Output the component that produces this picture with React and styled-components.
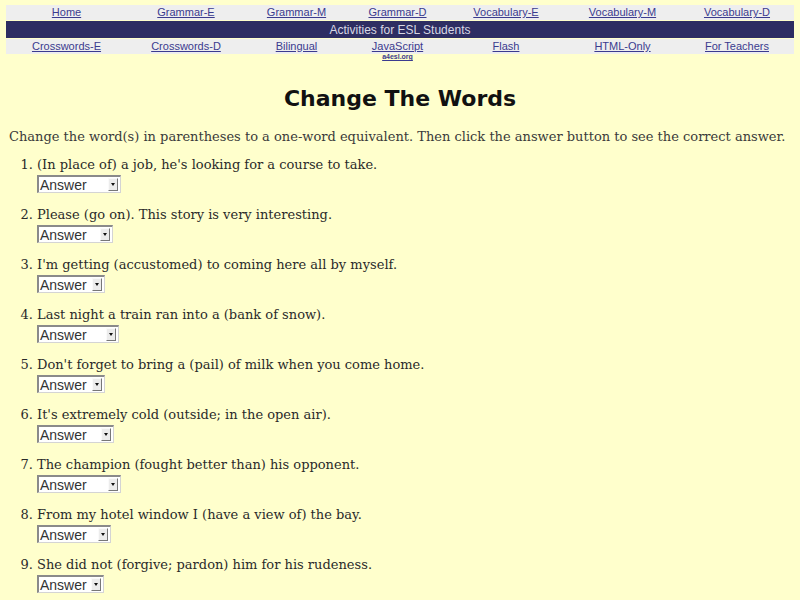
import React from "react";
import styled, { createGlobalStyle } from "styled-components";

const Global = createGlobalStyle`
  html, body {
    margin: 0;
    padding: 0;
    background: #ffffcc;
  }
  body {
    padding: 5px 6px 0 6px;
    font-family: "DejaVu Serif", serif;
    color: #2a2a2a;
  }
`;

const Nav = styled.div`
  display: flex;
  flex-direction: column;
  font-family: "Liberation Sans", Arial, sans-serif;
`;

const LinkRow = styled.div`
  display: grid;
  grid-template-columns: 121px 118px 103px 99px 118px 115px 114px;
  background: #eeeeee;
  height: 15px;
  align-items: center;
`;

const Cell = styled.div`
  display: flex;
  flex-direction: column;
  align-items: center;
  position: relative;
`;

const NavLink = styled.a`
  font-size: 11px;
  color: #3b3b8f;
  text-decoration: underline;
  line-height: 13px;
`;

const Banner = styled.div`
  background: #2e2e62;
  color: #d8d8e4;
  height: 17px;
  margin: 1px 0;
  display: flex;
  align-items: center;
  justify-content: center;
  font-size: 12px;
`;

const SiteTag = styled.a`
  position: absolute;
  top: 13px;
  font-size: 7px;
  font-weight: bold;
  color: #3b3b8f;
  text-decoration: underline;
`;

const Title = styled.h1`
  margin: 30px 0 0 0;
  text-align: center;
  font-family: "Comic Sans MS", "DejaVu Sans", sans-serif;
  font-weight: bold;
  font-size: 22px;
  color: #111;
  line-height: 30px;
`;

const Intro = styled.p`
  margin: 15px 0 0 3px;
  font-size: 13px;
  line-height: 16px;
  color: #3a3a3a;
  white-space: nowrap;
`;

const List = styled.ol`
  margin: 12px 0 0 0;
  padding: 0 0 0 31px;
  font-size: 13px;
  line-height: 16px;
  color: #2a2a2a;
`;

const Item = styled.li`
  margin-bottom: 14px;
`;

const Picker = styled.div`
  margin-top: 2px;
  width: ${(p) => p.$w}px;
  height: 18px;
  box-sizing: border-box;
  background: #fff;
  border-top: 2px solid #8a8a8a;
  border-left: 2px solid #8a8a8a;
  border-right: 1px solid #d4d4d4;
  border-bottom: 1px solid #d4d4d4;
  display: flex;
  align-items: center;
  justify-content: space-between;
  padding: 0 2px 0 1px;
  font-family: "Liberation Sans", Arial, sans-serif;
  font-size: 14px;
  color: #333;
`;

const Arrow = styled.span`
  width: 10px;
  height: 13px;
  box-sizing: border-box;
  background: #ececec;
  border-right: 1px solid #777;
  border-bottom: 1px solid #777;
  border-top: 1px solid #fafafa;
  border-left: 1px solid #fafafa;
  display: flex;
  align-items: center;
  justify-content: center;
  &::after {
    content: "";
    border-left: 2.5px solid transparent;
    border-right: 2.5px solid transparent;
    border-top: 3px solid #111;
  }
`;

const topLinks = ["Home", "Grammar-E", "Grammar-M", "Grammar-D", "Vocabulary-E", "Vocabulary-M", "Vocabulary-D"];
const bottomLinks = ["Crosswords-E", "Crosswords-D", "Bilingual", "JavaScript", "Flash", "HTML-Only", "For Teachers"];

const questions = [
  ["(In place of) a job, he's looking for a course to take.", 84],
  ["Please (go on). This story is very interesting.", 76],
  ["I'm getting (accustomed) to coming here all by myself.", 68],
  ["Last night a train ran into a (bank of snow).", 82],
  ["Don't forget to bring a (pail) of milk when you come home.", 68],
  ["It's extremely cold (outside; in the open air).", 77],
  ["The champion (fought better than) his opponent.", 84],
  ["From my hotel window I (have a view of) the bay.", 74],
  ["She did not (forgive; pardon) him for his rudeness.", 67],
];

export default function App() {
  return (
    <>
      <Global />
      <Nav>
        <LinkRow>
          {topLinks.map((t) => (
            <Cell key={t}>
              <NavLink href="#">{t}</NavLink>
            </Cell>
          ))}
        </LinkRow>
        <Banner>Activities for ESL Students</Banner>
        <LinkRow>
          {bottomLinks.map((t) => (
            <Cell key={t}>
              <NavLink href="#">{t}</NavLink>
              {t === "JavaScript" && <SiteTag href="#">a4esl.org</SiteTag>}
            </Cell>
          ))}
        </LinkRow>
      </Nav>
      <Title>Change The Words</Title>
      <Intro>
        Change the word(s) in parentheses to a one-word equivalent. Then click the answer button to see the correct answer.
      </Intro>
      <List>
        {questions.map(([q, w]) => (
          <Item key={q}>
            {q}
            <Picker $w={w}>
              Answer
              <Arrow />
            </Picker>
          </Item>
        ))}
      </List>
    </>
  );
}
